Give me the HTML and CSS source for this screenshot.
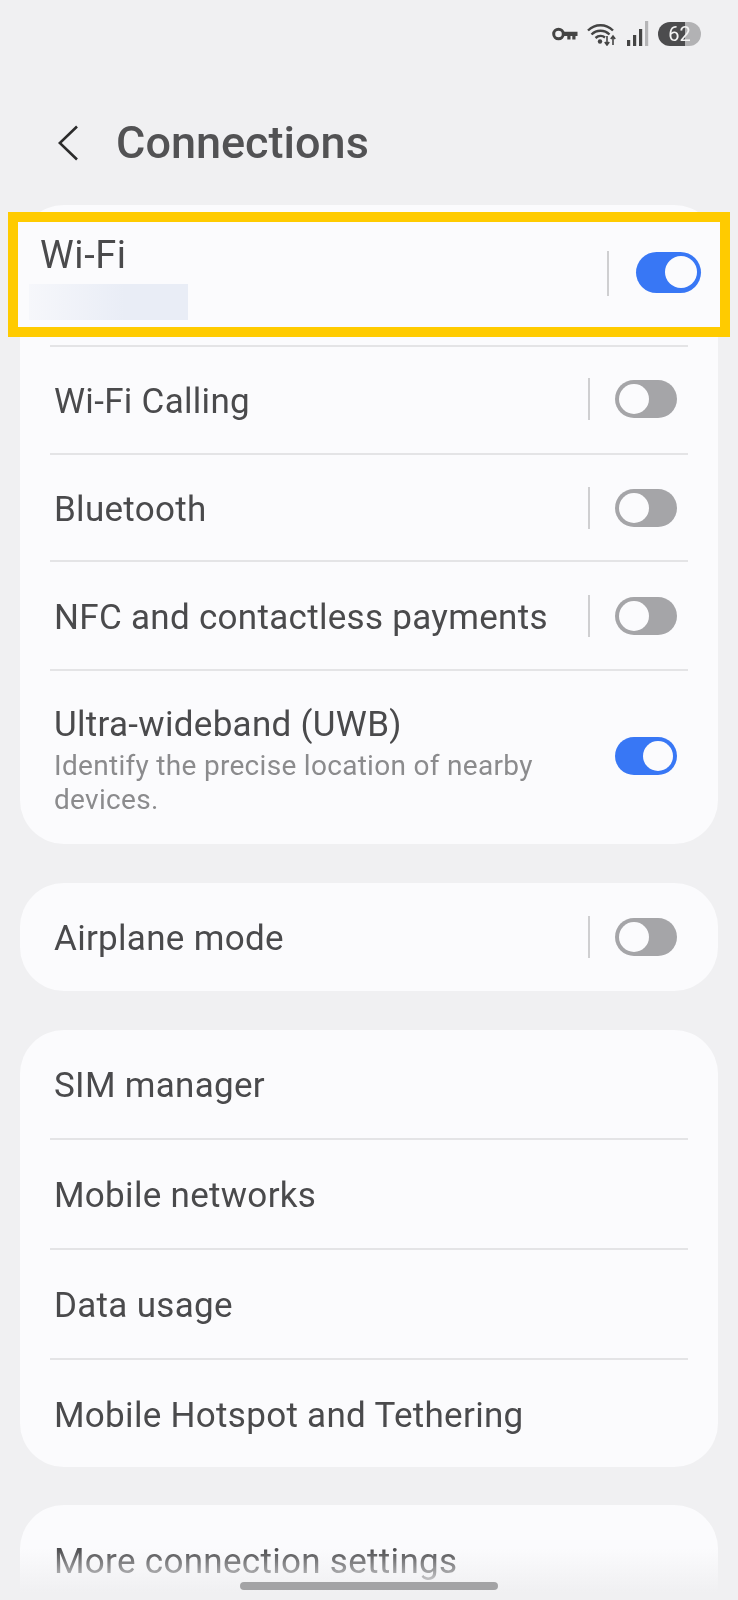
FILE: index.html
```html
<!DOCTYPE html>
<html lang="en">
<head>
<meta charset="utf-8">
<title>Connections</title>
<link rel="stylesheet" href="styles.css">
</head>
<body>
<div class="screen">
  <div class="status">
    <svg class="ic-key" viewBox="0 0 26 14" aria-hidden="true"><circle cx="6.500" cy="7" r="4.800" fill="none" stroke="#444" stroke-width="3"/><path d="M11 4.800h14.500v4.200h-2v3.500h-3.200V9h-1.800v3.500h-3.200V9H11z" fill="#444"/></svg>
    <svg class="ic-wifi" viewBox="0 0 30 24" aria-hidden="true"><path d="M1 8.500C8 1.500 19 1.500 26 8.500M4.500 12.500C9.500 7.500 17.500 7.500 22.500 12.500M8.500 16C11.500 13.500 15.500 13.500 18 15.500" fill="none" stroke="#444" stroke-width="2.400"/><circle cx="13" cy="19.500" r="2.200" fill="#444"/><path d="M20 14v8M17.800 20l2.200 3 2.200-3M26 23v-8M23.800 17l2.200-3 2.200 3" fill="none" stroke="#444" stroke-width="1.600"/></svg>
    <svg class="ic-signal" viewBox="0 0 22 26" aria-hidden="true"><rect x="0" y="19" width="3.200" height="6" fill="#444"/><rect x="6" y="14" width="3.200" height="11" fill="#444"/><rect x="12" y="8" width="3.200" height="17" fill="#444"/><rect x="18" y="0" width="3.200" height="25" fill="#b5b5b7"/></svg>
    <div class="battery"><span class="battery-num">62</span></div>
  </div>

  <header class="head">
    <svg class="back" viewBox="0 0 20 36" aria-hidden="true"><path d="M19 1.500 1.800 18 19 34.500" fill="none" stroke="#2b2b2b" stroke-width="2.600"/></svg>
    <h1 class="title">Connections</h1>
  </header>

  <section class="card card-first">
    <div class="highlight">
      <div class="hl-text">
        <div class="label label-hl">Wi-Fi</div>
        <div class="redacted"></div>
      </div>
      <span class="divider divider-hl"></span>
      <span class="toggle toggle-hl on"></span>
    </div>
    <div class="rows">
      <div class="row row-raised"><span class="label">Wi-Fi Calling</span><span class="divider"></span><span class="toggle"></span></div>
      <div class="row"><span class="label">Bluetooth</span><span class="divider"></span><span class="toggle"></span></div>
      <div class="row"><span class="label">NFC and contactless payments</span><span class="divider"></span><span class="toggle"></span></div>
      <div class="row row-tall">
        <div class="stack">
          <div class="label">Ultra-wideband (UWB)</div>
          <div class="sub">Identify the precise location of nearby devices.</div>
        </div>
        <span class="toggle on"></span>
      </div>
    </div>
  </section>

  <section class="card">
    <div class="rows">
      <div class="row row-plain"><span class="label">Airplane mode</span><span class="divider"></span><span class="toggle"></span></div>
    </div>
  </section>

  <section class="card card-links">
    <div class="rows">
      <div class="row row-plain"><span class="label">SIM manager</span></div>
      <div class="row row-link"><span class="label">Mobile networks</span></div>
      <div class="row row-link"><span class="label">Data usage</span></div>
      <div class="row row-link"><span class="label">Mobile Hotspot and Tethering</span></div>
    </div>
  </section>

  <section class="card card-last">
    <div class="rows">
      <div class="row row-plain row-link"><span class="label">More connection settings</span></div>
    </div>
  </section>

  <div class="fade"></div>
  <div class="home-bar"></div>
</div>
</body>
</html>
```
FILE: styles.css
```css
* { box-sizing: border-box; }
html, body { margin: 0; padding: 0; }
body { background: #f0f0f2; font-family: Roboto, "Noto Sans", sans-serif; color: #4a4a4c; }
.screen { position: relative; width: 738px; height: 1600px; overflow: hidden; background: #f0f0f2; padding: 0 20px; filter: blur(.4px); }

.status { height: 48px; padding: 20px 17px 0 0; display: flex; align-items: center; justify-content: flex-end; }
.ic-key { width: 26px; height: 14px; margin-right: 9px; }
.ic-wifi { width: 30px; height: 24px; margin-right: 10px; }
.ic-signal { width: 22px; height: 26px; margin-right: 9px; }
.battery { width: 43px; height: 24px; border-radius: 12px; background: linear-gradient(90deg, #4c4c4e 0 62%, #b2b2b4 62%); display: flex; align-items: center; justify-content: center; }
.battery-num { color: #f4f4f4; font-size: 20px; line-height: 24px; }

.head { height: 157px; padding: 32px 0 0 38px; display: flex; align-items: center; }
.back { width: 20px; height: 36px; flex: none; }
.title { margin: 0 0 0 38px; font-size: 45px; font-weight: 500; line-height: 60px; color: #525254; }

.card { background: #fbfbfd; border-radius: 44px; margin-bottom: 39px; }
.card-first { padding-top: 7px; height: 639px; }
.card-links { margin-bottom: 38px; }
.card-last { height: 140px; margin-bottom: 0; }

.highlight { margin: 0 -12px 8px; height: 125px; border: 10px solid #ffcb00; display: flex; align-items: center; padding: 0 19px 0 22px; background: #fbfbfd; }
.hl-text { flex: 1; padding-top: 3px; }
.redacted { width: 159px; height: 36px; margin: 7px 0 0 -11px; background: linear-gradient(90deg, #f6f7fb, #e9edf6 60%); }

.rows { padding: 0 30px; }
.row { height: 108px; border-top: 2px solid #e4e4e6; display: flex; align-items: center; }
.row:nth-child(2) { height: 107px; }
.row:nth-child(3) { height: 109px; }
.row-plain { border-top: 0; }
.rows .row-link { height: 110px; }
.rows .row-link:last-child { height: 109px; }
.row-tall { height: 174px; padding-bottom: 2px; }
.row > .label { flex: 1; padding: 4px 0 0 4px; }
.stack { flex: 1; padding: 8px 0 0 4px; }

.label { font-size: 35px; line-height: 44px; letter-spacing: .3px; color: #4a4a4c; white-space: nowrap; }
.label-hl { font-size: 38px; letter-spacing: .6px; }
.sub { width: 520px; font-size: 28px; line-height: 34px; letter-spacing: .3px; color: #8b8b8d; margin-top: 2px; }

.divider { width: 2px; height: 42px; background: #cfcfd1; margin: 0 25px 0 0; flex: none; }
.divider-hl { height: 45px; margin: 0 27px 3px 0; }

.toggle { position: relative; width: 62px; height: 38px; border-radius: 19px; background: #a5a5a8; flex: none; margin: 0 11px 0 0; }
.toggle::after { content: ""; position: absolute; top: 4px; left: 4px; width: 30px; height: 30px; border-radius: 50%; background: #fbfbfd; }
.toggle.on { background: #3877f5; }
.toggle.on::after { left: auto; right: 4px; }
.row-raised .divider, .row-raised .toggle { margin-bottom: 3px; }
.toggle-hl { width: 65px; height: 41px; border-radius: 21px; margin: 0 0 5px 0; }
.toggle-hl::after { width: 32px; height: 32px; top: 4.500px; }

.fade { position: absolute; left: 0; right: 0; bottom: 0; height: 52px; background: linear-gradient(180deg, rgba(240,240,242,0), #f0f0f2 85%); }
.home-bar { position: absolute; left: 240px; top: 1582px; width: 258px; height: 8px; border-radius: 4px; background: #a3a3a5; }
```
